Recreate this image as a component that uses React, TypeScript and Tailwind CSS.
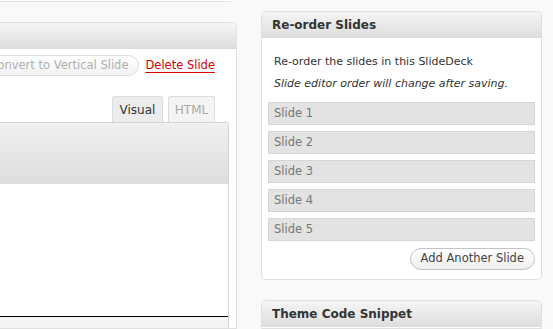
import React from "react";

const SLIDES = ["Slide 1", "Slide 2", "Slide 3", "Slide 4", "Slide 5"];

function PanelHeader({ title }: { title: string }) {
  return (
    <div className="h-[26px] flex items-center px-[10px] rounded-t-[5px] border-b border-[#dcdcdc] bg-gradient-to-b from-[#f5f5f5] to-[#dedede] text-[12px] font-bold text-[#333]">
      {title}
    </div>
  );
}

export default function App() {
  return (
    <div
      className="w-[553px] h-[329px] overflow-hidden bg-[#f9f9f9] flex text-[11px] text-[#333]"
      style={{ fontFamily: '"DejaVu Sans", Verdana, sans-serif' }}
    >
      {/* left column: slide editor */}
      <div className="w-[237px] shrink-0 flex flex-col">
        <div className="h-[2px] w-[232px] bg-white border-b border-[#e3e3e3] rounded-br-[4px]" />

        <div className="mt-[20px] ml-[-40px] flex-1 flex flex-col bg-white border border-[#dfdfdf] rounded-tr-[5px]">
          <div className="h-[26px] rounded-tr-[5px] border-b border-[#dcdcdc] bg-gradient-to-b from-[#f5f5f5] to-[#dedede]" />

          <div className="flex items-center justify-end gap-[6px] pr-[21px] pt-[6px]">
            <button className="h-[21px] px-[10px] rounded-full border border-[#dcdcdc] bg-gradient-to-b from-white to-[#f2f2f2] text-[11.5px] text-[#b0b0b0] whitespace-nowrap">
              Convert to Vertical Slide
            </button>
            <a className="text-[11.5px] text-[#d40000] underline underline-offset-[3px] whitespace-nowrap">Delete Slide</a>
          </div>

          <div className="flex justify-end gap-[5px] pr-[21px] mt-[20px]">
            <div className="h-[26px] w-[51px] flex items-center justify-center rounded-t-[3px] border border-b-0 border-[#dcdcdc] bg-[#ececec] text-[12px] text-[#333]">
              Visual
            </div>
            <div className="h-[26px] w-[47px] flex items-center justify-center rounded-t-[3px] border border-b-0 border-[#dcdcdc] bg-[#f4f4f4] text-[12px] text-[#aaa]">
              HTML
            </div>
          </div>

          <div className="mr-[7px] flex-1 flex flex-col border-r border-t border-[#d4d4d4] rounded-tr-[3px]">
            <div className="h-[61px] bg-gradient-to-b from-[#f0f0f0] to-[#dddddd]" />
            <div className="h-[133px] bg-white border-b border-black" />
            <div className="flex-1 bg-[#f4f4f4]" />
          </div>
        </div>
      </div>

      {/* right column: sidebar */}
      <div className="ml-[24px] w-[281px] shrink-0 flex flex-col pt-[11px]">
        <div className="rounded-[5px] border border-[#dfdfdf] bg-white">
          <PanelHeader title="Re-order Slides" />
          <div className="px-[6px] pt-[13px] pb-[9px]">
            <p className="px-[6px] leading-[22px]">Re-order the slides in this SlideDeck</p>
            <p className="px-[6px] leading-[22px] italic">Slide editor order will change after saving.</p>
            <ul className="mt-[7px] flex flex-col gap-[6px]">
              {SLIDES.map((s) => (
                <li
                  key={s}
                  className="h-[23px] flex items-center px-[5px] bg-[#e3e3e3] border border-[#d6d6d6] text-[11.5px] text-[#777]"
                >
                  {s}
                </li>
              ))}
            </ul>
            <div className="flex justify-end mt-[7px]">
              <button className="h-[22px] px-[10px] rounded-full border border-[#c4c4c4] bg-gradient-to-b from-white to-[#efefef] text-[11.5px] text-[#444]">
                Add Another Slide
              </button>
            </div>
          </div>
        </div>

        <div className="mt-[20px] rounded-t-[5px] border border-[#dfdfdf] bg-white h-[60px]">
          <PanelHeader title="Theme Code Snippet" />
        </div>
      </div>
    </div>
  );
}
